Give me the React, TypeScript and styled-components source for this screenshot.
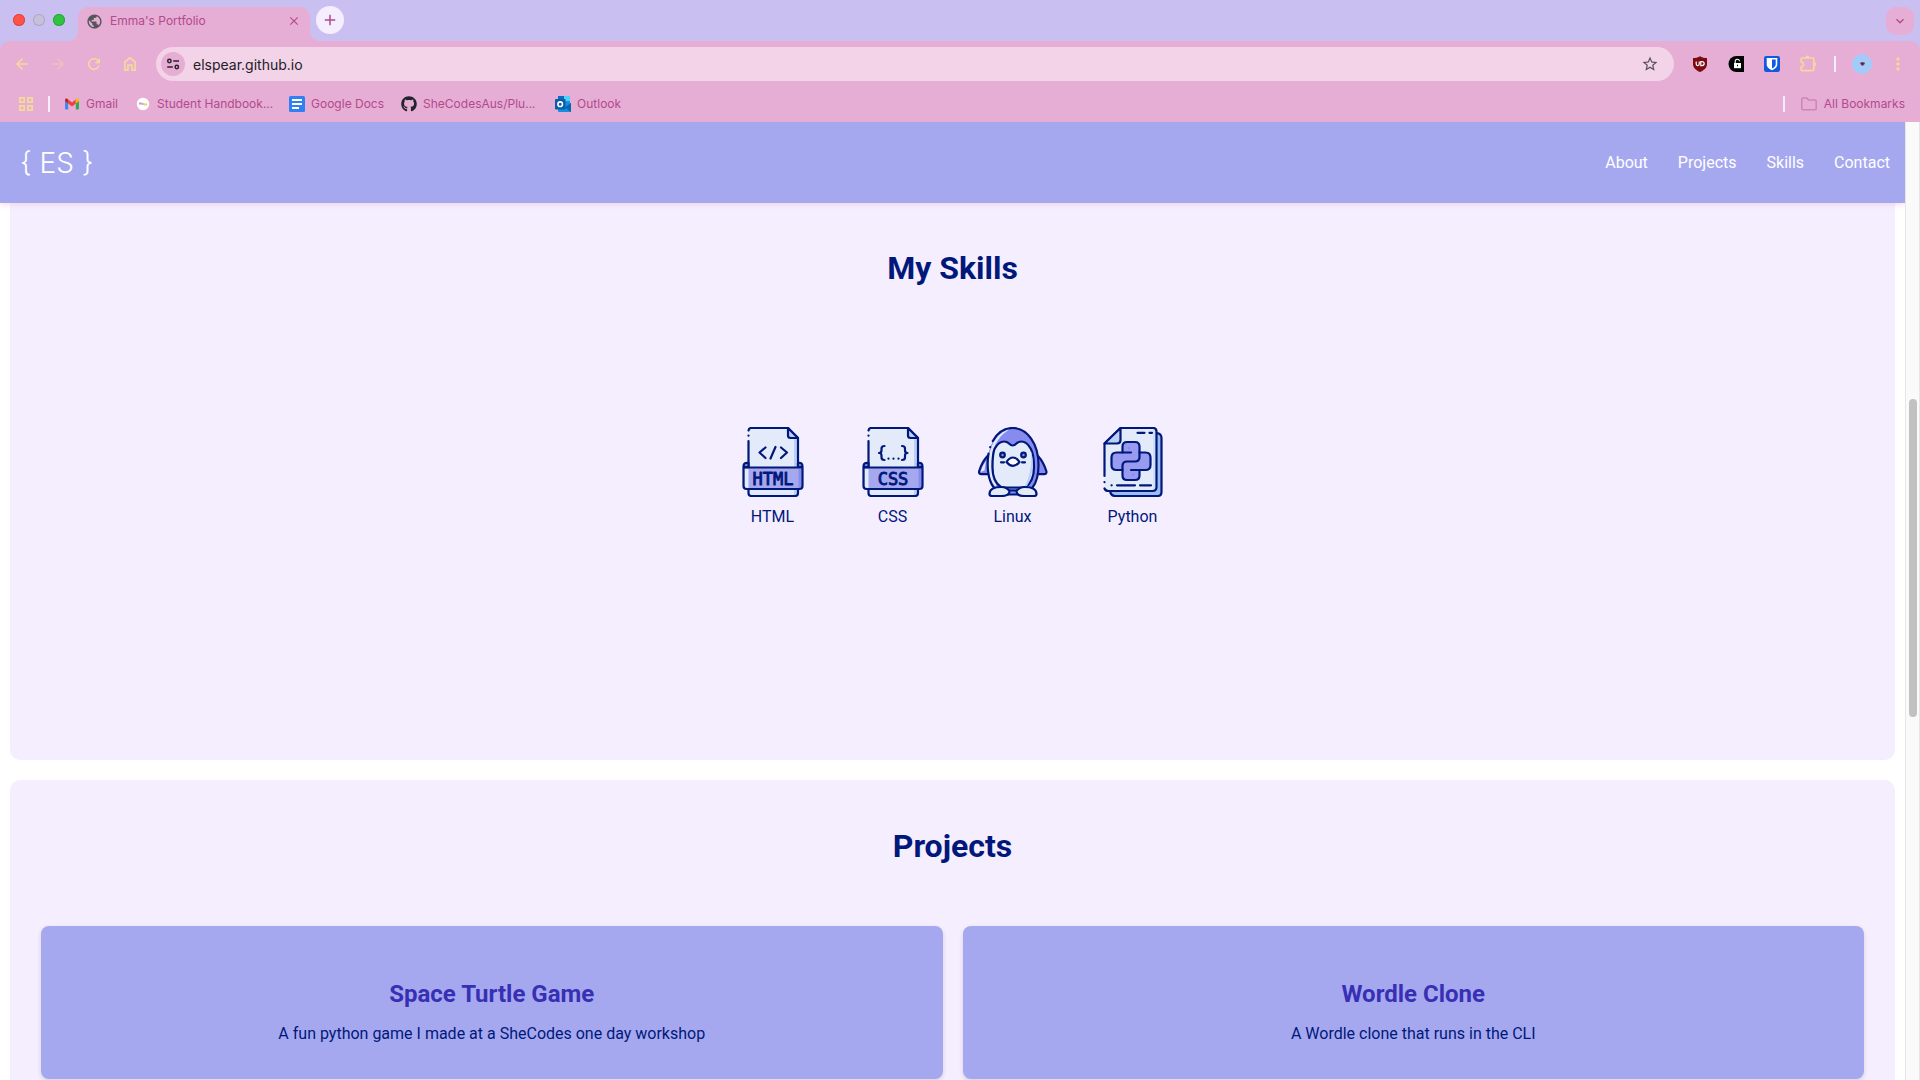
import React from "react";
import styled, { createGlobalStyle, css } from "styled-components";
import { FaGithub } from "react-icons/fa";
import {
  MdAdd,
  MdArrowBack,
  MdArrowForward,
  MdClose,
  MdExpandMore,
  MdMoreVert,
  MdPublic,
  MdRefresh,
  MdStarBorder,
} from "react-icons/md";

const color = {
  strip: "#c9bff0",
  pink: "#e6add5",
  field: "#f3d3e8",
  plum: "#b34a8c",
  butter: "#f5d99b",
  white: "#f5eeff",
  lavender: "#a6a8ef",
  navy: "#00187a",
  indigo: "#3730b4",
  paper: "#e3ebfb",
  shade: "#bcd0f7",
  violet: "#888bee",
};

const GlobalStyle = createGlobalStyle`
  *, *::before, *::after { box-sizing: border-box; }
  body { margin: 0; background: #fff; }
  button { border: 0; padding: 0; background: none; font: inherit; color: inherit; cursor: pointer; }
  a { color: inherit; text-decoration: none; }
  h2, h3, p, ul { margin: 0; padding: 0; }
  svg { display: block; flex: none; }
`;

/* ---------- Browser window ---------- */

const Window = styled.div`
  display: flex;
  flex-direction: column;
  height: 100vh;
  overflow: hidden;
`;

const Chrome = styled.header`
  flex: none;
  background: ${color.strip};
  color: ${color.plum};
  font-family: Inter, "Liberation Sans", sans-serif;
  font-size: 12px;
  line-height: 16px;
`;

const TabStrip = styled.div`
  display: flex;
  align-items: flex-start;
  height: 41px;
  padding: 0 6px 0 13px;
`;

const Lights = styled.div`
  display: flex;
  gap: 8px;
  padding-top: 14px;
  margin-right: 13px;
`;

const Light = styled.button<{ $fill: string; $edge: string }>`
  width: 12px;
  height: 12px;
  border-radius: 50%;
  background: ${(p) => p.$fill};
  box-shadow: inset 0 0 0 1px ${(p) => p.$edge};
`;

const flare = css`
  content: "";
  position: absolute;
  bottom: 0;
  width: 10px;
  height: 10px;
`;

const Tab = styled.div`
  position: relative;
  display: flex;
  align-items: center;
  gap: 7px;
  width: 232px;
  height: 34px;
  margin-top: 7px;
  padding: 0 9px 6px 8px;
  border-radius: 10px 10px 0 0;
  background: ${color.pink};

  &::before {
    ${flare}
    left: -10px;
    background: radial-gradient(circle at 0 0, transparent 10px, ${color.pink} 10px);
  }
  &::after {
    ${flare}
    right: -10px;
    background: radial-gradient(circle at 100% 0, transparent 10px, ${color.pink} 10px);
  }
`;

const TabTitle = styled.span`
  flex: 1;
  white-space: nowrap;
`;

const NewTab = styled.button`
  display: grid;
  place-items: center;
  width: 28px;
  height: 28px;
  margin: 6px auto 0 6px;
  border-radius: 50%;
  background: ${color.white};
`;

const TabSearch = styled.button`
  display: grid;
  place-items: center;
  width: 28px;
  height: 28px;
  margin-top: 7px;
  border-radius: 10px;
  background: ${color.pink};
`;

const Bars = styled.div`
  border-radius: 10px 10px 0 0;
  background: ${color.pink};
`;

const Toolbar = styled.div`
  display: flex;
  align-items: center;
  padding: 6px 4px;
`;

const ToolButton = styled.button<{ $dim?: boolean }>`
  display: grid;
  place-items: center;
  width: 36px;
  height: 34px;
  color: ${color.butter};
  opacity: ${(p) => (p.$dim ? 0.5 : 1)};
`;

const Omnibox = styled.form`
  display: flex;
  flex: 1;
  align-items: center;
  gap: 8px;
  height: 34px;
  margin: 0 8px;
  padding: 0 15px 0 5px;
  border-radius: 17px;
  background: ${color.field};
`;

const SiteInfo = styled.button`
  display: grid;
  place-items: center;
  width: 24px;
  height: 24px;
  border-radius: 50%;
  background: ${color.pink};
`;

const Address = styled.input`
  flex: 1;
  min-width: 0;
  padding: 0;
  border: 0;
  outline: 0;
  background: none;
  color: #222127;
  font-family: inherit;
  font-size: 14px;
`;

const Separator = styled.span`
  width: 2px;
  height: 16px;
  margin: 0 8px;
  background: ${color.white};
`;

const Bookmarks = styled.nav`
  display: flex;
  align-items: center;
  height: 35px;
  padding: 0 15px 2px 18px;
`;

const BookmarkList = styled.div`
  display: flex;
  flex: 1;
  gap: 17px;
  margin-left: 6px;
`;

const Bookmark = styled.a`
  display: flex;
  align-items: center;
  gap: 6px;
  white-space: nowrap;
`;

const BookmarkLabel = styled.span<{ $clipped?: boolean }>`
  ${(p) => p.$clipped && "width: 115px;"}
`;

const AllBookmarks = styled.button`
  display: flex;
  align-items: center;
  gap: 7px;
  margin-left: 8px;
`;

const AppsButton = styled.button`
  margin-right: 6px;
`;

/* ---------- Portfolio page ---------- */

const Viewport = styled.div`
  display: flex;
  flex: 1;
  min-height: 0;
`;

const Page = styled.div`
  display: flex;
  flex: 1;
  flex-direction: column;
  min-width: 0;
  overflow: hidden;
  background: #fff;
  color: ${color.navy};
  font-family: Roboto, "Liberation Sans", sans-serif;
  font-size: 16px;
  line-height: 20px;
`;

const NavBar = styled.header`
  position: relative;
  z-index: 1;
  display: flex;
  flex: none;
  align-items: center;
  justify-content: space-between;
  height: 81px;
  padding: 0 15px 0 20px;
  background: ${color.lavender};
  color: #fff;
  box-shadow: 0 2px 5px rgba(230, 173, 213, 0.35);
`;

const Logo = styled.a`
  font-family: Inter, "Open Sans", sans-serif;
  font-size: 28px;
  font-weight: 300;
  line-height: 40px;
`;

const NavLinks = styled.nav`
  display: flex;
  gap: 30px;
`;

const Main = styled.main`
  display: flex;
  flex: 1;
  flex-direction: column;
  gap: 20px;
  min-height: 0;
  padding: 0 10px;
  overflow: hidden;
`;

const Section = styled.section<{ $continued?: boolean }>`
  flex: none;
  padding: ${(p) => (p.$continued ? "45px 31px" : "46px 31px")};
  border-radius: ${(p) => (p.$continued ? "0 0 10px 10px" : "10px")};
  background: ${color.white};
  text-align: center;
`;

const Heading = styled.h2`
  font-size: 32px;
  font-weight: 700;
  line-height: 40px;
`;

const Skills = styled.ul`
  display: flex;
  justify-content: center;
  padding: 139px 0 188px;
  list-style: none;
`;

const Skill = styled.li`
  display: flex;
  flex-direction: column;
  align-items: center;
  gap: 10px;
  width: 120px;
`;

const Cards = styled.div`
  display: grid;
  grid-template-columns: 1fr 1fr;
  gap: 20px;
  padding-top: 60px;
`;

const Card = styled.article`
  display: flex;
  flex-direction: column;
  gap: 16px;
  padding: 54px 20px 35px;
  border-radius: 8px;
  background: ${color.lavender};
  box-shadow: 0 2px 5px rgba(0, 0, 0, 0.12);
`;

const CardTitle = styled.h3`
  color: ${color.indigo};
  font-size: 24px;
  font-weight: 700;
  line-height: 28px;
`;

const ScrollTrack = styled.div`
  flex: none;
  width: 15px;
  padding: 277px 2px 0 3px;
  border: solid #e6e6e6;
  border-width: 0 1px;
  background: #fafafa;
`;

const ScrollThumb = styled.div`
  width: 8px;
  height: 318px;
  border-radius: 4px;
  background: #c1c1c1;
`;

/* ---------- Toolbar and bookmark icons ---------- */

const HomeIcon = () => (
  <svg width="14" height="16" viewBox="0 0 14 16" fill="none" stroke="currentColor" strokeWidth="1.7">
    <path d="M1.9 14.1V6L7 1.9 12.1 6v8.1H9V9.2H5v4.9z" />
  </svg>
);

const PuzzleIcon = () => (
  <svg width="18" height="18" viewBox="0 0 18 18">
    <path
      d="M3 3h11q.8 0 .8.800v11q0 .8-.8.800H3q-.8 0-.8-.8v-3q2.400-.5 2.400-2.500T2.200 6.800v-3Q2.200 3 3 3z"
      fill="none"
      stroke="currentColor"
      strokeWidth="1.700"
    />
    <path d="M6.500 2.500a2 2 0 0 1 4 0zM15.300 7.300a2 2 0 0 1 0 4z" fill="currentColor" />
  </svg>
);

const TuneIcon = () => (
  <svg width="14" height="12" viewBox="0 0 14 12" fill="none" stroke="#28232a" strokeWidth="1.5">
    <circle cx="3.400" cy="3" r="1.700" />
    <path d="M7.200 3h5.800M1.200 9h5.600" />
    <circle cx="10.800" cy="9" r="1.700" />
  </svg>
);

const ShieldIcon = () => (
  <svg width="16" height="16" viewBox="0 0 16 16">
    <path d="M8 .2C10 1.500 12.300 2 15 2v6c0 4-3.400 6.500-7 8-3.600-1.500-7-4-7-8V2C3.700 2 6 1.500 8 .2z" fill="#7d0a10" />
    <path d="M4.200 5.500v2.600c0 2 3 2 3 0V5.500M8.800 5.600v4h1.100c3 0 3-4 0-4z" fill="none" stroke="#fff" strokeWidth="1.200" />
  </svg>
);

const LockIcon = () => (
  <svg width="16" height="16" viewBox="0 0 16 16">
    <path d="M16 0v16H8.500A8 8 0 0 1 8.500 0z" fill="#000" />
    <path d="M6 7h7v5.200H6z" fill="#fff" />
    <path d="M7.200 7V5.600a2.200 2.200 0 0 1 4.400-.4" fill="none" stroke="#fff" strokeWidth="1.100" />
    <path d="M9 8.700h1v1.600H9z" fill="#000" />
  </svg>
);

const VaultIcon = () => (
  <svg width="16" height="16" viewBox="0 0 16 16">
    <rect width="16" height="16" rx="2.200" fill="#0f5bdc" />
    <path d="M2.700 2h10.600v6.200c0 3-2.600 4.800-5.300 6-2.700-1.200-5.300-3-5.300-6z" fill="#fff" />
    <path d="M8 3.600h3.700v4.700c0 1.900-1.700 3.200-3.700 4.200z" fill="#0f5bdc" />
  </svg>
);

const AvatarIcon = () => (
  <svg width="20" height="20" viewBox="0 0 20 20">
    <circle cx="10" cy="10" r="10" fill="#a2cbfa" />
    <path d="M8.300 8.500h4.400v1.600l-2.200 1.900-2.200-1.900z" fill="#7c2a3d" />
    <path d="M9.500 8.500h2v1.300h-2z" fill="#35303e" />
  </svg>
);

const AppsIcon = () => (
  <svg width="16" height="16" viewBox="0 0 16 16" fill="none" stroke={color.butter} strokeWidth="1.800">
    <path d="M1.900 1.900h4.200v4.200H1.900zM9.900 1.900h4.200v4.200H9.900zM1.900 9.900h4.200v4.200H1.900zM9.900 9.900h4.200v4.200H9.900z" />
  </svg>
);

const GmailIcon = () => (
  <svg width="16" height="16" viewBox="0 0 16 16">
    <path d="M1 4.500l3.200 2.400v6.600H2a1 1 0 0 1-1-1z" fill="#4285f4" />
    <path d="M15 4.500l-3.200 2.400v6.600H14a1 1 0 0 0 1-1z" fill="#34a853" />
    <path d="M4.200 3.600L8 6.500l3.800-2.900v3.900L8 10.400 4.200 7.500z" fill="#ea4335" />
    <path d="M1 4.100c0-1.500 1.500-1.900 2.500-1.100l.7.600v3.900L1 5.100z" fill="#c5221f" />
    <path d="M15 4.100c0-1.500-1.500-1.900-2.500-1.100l-.7.600v3.900L15 5.100z" fill="#fbbc04" />
  </svg>
);

const HandbookIcon = () => (
  <svg width="16" height="16" viewBox="0 0 16 16">
    <circle cx="8" cy="8" r="6.200" fill="#fff" />
    <path d="M4 7.500h3.500" stroke="#b6a0d8" strokeWidth="2" />
    <path d="M6.500 8h3" stroke="#e9b79e" strokeWidth="2" />
    <path d="M9 8.500h3.300" stroke="#f3cf72" strokeWidth="2" />
  </svg>
);

const DocsIcon = () => (
  <svg width="16" height="16" viewBox="0 0 16 16">
    <rect width="16" height="16" rx="1.500" fill="#3180f3" />
    <path d="M3 4h10M3 8h10M3 12h7" stroke="#fff" strokeWidth="1.900" />
  </svg>
);

const OutlookIcon = () => (
  <svg width="16" height="16" viewBox="0 0 16 16">
    <path d="M3 0h12v9H3z" fill="#1a8fe0" />
    <path d="M9 0h6v5H9z" fill="#50d0fa" />
    <path d="M3 0h6v4H3z" fill="#0f6cbd" />
    <path d="M3 8l13-1v9H4a1 1 0 0 1-1-1z" fill="#1490df" />
    <path d="M16 7v9l-6-4.500z" fill="#0a63ad" />
    <rect y="3" width="10.500" height="10.500" rx="1" fill="#0a5cad" />
    <circle cx="5.200" cy="8.200" r="2.300" fill="none" stroke="#fff" strokeWidth="1.600" />
  </svg>
);

const FolderIcon = () => (
  <svg width="16" height="14" viewBox="0 0 16 14" fill="none" stroke="#d283b5" strokeWidth="1.500">
    <path d="M.8 2.200c0-.8.400-1.200 1.200-1.200h3.800l1.700 2H14c.8 0 1.200.4 1.200 1.200v7.400c0 .8-.4 1.200-1.200 1.200H2c-.8 0-1.200-.4-1.200-1.200z" />
  </svg>
);

/* ---------- Skill illustrations ---------- */

const Art = ({ children }: { children: React.ReactNode }) => (
  <svg
    width="70"
    height="70"
    viewBox="0 0 70 70"
    fill="none"
    stroke={color.navy}
    strokeWidth="2.200"
    strokeLinecap="round"
    strokeLinejoin="round"
    aria-hidden="true"
  >
    {children}
  </svg>
);

/** A dog-eared sheet wrapped by a band that carries the language name. */
const SheetIcon = ({ label, children }: { label: string; children: React.ReactNode }) => (
  <Art>
    <path d="M10.500 3Q10.500 1 13 1h37l10 10v55q0 3-3 3H13q-2.500 0-2.500-3z" fill={color.paper} stroke="none" />
    <path d="M56 11h4v55q0 3-3 3h-4q3 0 3-3z" fill={color.shade} stroke="none" />
    <path d="M10.500 14v26M10.500 8.500v.2M10.500 3.500Q11 1 13 1h37l10 10v29" />
    <path d="M50 1v7.500q0 2.500 2.500 2.500H60z" fill={color.shade} />
    <path d="M10.500 62v4q0 3 3 3H57q3 0 3-3v-4" />
    <path d="M10.500 40.500v-4.500q-5-1-5 3.500zM60 40.500v-4.500q4.500-1 4.500 3.500z" fill={color.violet} />
    <path d="M5.500 40.500h59V59q0 3-3 3h-53q-3 0-3-3z" fill={color.lavender} stroke="none" />
    <path d="M6.500 42h4v19h-1.500q-2.500 0-2.500-3z" fill={color.paper} stroke="none" />
    <path d="M60.500 42h3v16q0 3-3 3z" fill={color.violet} stroke="none" />
    <path d="M5.500 40.500h59V59q0 3-3 3h-53q-3 0-3-3z" />
    {children}
    <text
      x="35"
      y="57.500"
      textAnchor="middle"
      fontFamily="DejaVu Sans Mono, monospace"
      fontSize="17"
      fill={color.navy}
      strokeWidth="0.900"
    >
      {label}
    </text>
  </Art>
);

const HtmlIcon = () => (
  <SheetIcon label="HTML">
    <path d="M27.500 20.500l-6 5 6 5.500M37.500 20l-5 11.500M43 20.500l6 5-6 5.500" />
  </SheetIcon>
);

const CssIcon = () => (
  <SheetIcon label="CSS">
    <path d="M26.500 19q-3 0-3 2.500v2q0 2.500-2.500 2.500 2.500 0 2.500 2.500v2q0 2.500 3 2.500M44 19q3 0 3 2.500v2q0 2.500 2.500 2.500-2.500 0-2.500 2.500v2q0 2.500-3 2.500M30.500 31.500v.2M35.500 31.500v.2M40.500 31.500v.2" />
  </SheetIcon>
);

const LinuxIcon = () => (
  <Art>
    <path d="M9.500 29Q4 35 1.200 44q-.8 3 2.300 3.200h6M60 29q5.500 6 8.300 15 .8 3-2.300 3.200h-6" fill={color.violet} />
    <path d="M8 34q-4 5-5.500 11l4-1.500z" fill={color.paper} stroke="none" />
    <path d="M34.700 1C20 1 9.500 17 9.500 38c0 12 4 22 9 26h32.400c5-4 9-14 9-26C59.900 17 49.500 1 34.700 1z" fill={color.violet} stroke="none" />
    <path d="M32 2C21 5 12.500 15 10.500 32c-1 12 1.500 22 7 28l1-2c-5-6-6-16-4.500-28C15.500 17 22 8 32 2z" fill={color.paper} stroke="none" />
    <path d="M14.800 14C19.500 5.500 26.500 1 34.700 1 49.500 1 60.500 17 60.500 38c0 10-2.500 18-6 22.500M12.200 20v.2M10.500 26.500C8.500 39 10 53 15.500 60" />
    <path d="M16.500 22q4-7.500 9.500-7.500 3 0 5 2 3.700 4 7.400 0 2-2 5-2 5.500 0 9.500 7.500C55.500 27 56 34 56 40c0 10-3.500 17-9 20.500H23.500C18 57 14.500 50 14.500 40c0-6 0-13 2-18z" fill={color.paper} />
    <path d="M53 24c3 9 2 26-4 35l-3 1c6-9 8-23 7-36z" fill={color.shade} stroke="none" />
    <circle cx="24.500" cy="28" r="2.300" fill={color.violet} />
    <circle cx="45.500" cy="28" r="2.300" fill={color.violet} />
    <path d="M23 35.300h3M44 35.300h3" />
    <path d="M28.500 35q3-4.500 6.500-4.500t6.500 4.500q-3 3.800-6.500 3.800T28.500 35z" fill="#fff" />
    <path d="M30 63.500h10v4H30z" fill={color.violet} />
    <path d="M11.500 67q0-7 12-7 5 0 8 4 0 5-8 5h-9q-3 0-3-2zM58.500 67q0-7-12-7-5 0-8 4 0 5 8 5h9q3 0 3-2z" fill={color.paper} />
  </Art>
);

const PythonIcon = () => (
  <Art>
    <path d="M58.500 6q5 .5 5 5v54q0 4-4 4H17q-4 0-5-5z" fill="#9dbcf2" />
    <path d="M22.500 1H55q3.500 0 3.500 3.500V60q0 4-4 4h-44q-4 0-4-4V16.500z" fill={color.paper} stroke="none" />
    <path d="M55 1q3.500 0 3.500 3.500V60q0 4-4 4H51q4 0 4-4V1z" fill="#cfdefa" stroke="none" />
    <path d="M6.500 49V16.500L22.500 1H55q3.500 0 3.500 3.500V60q0 4-4 4h-44q-3 0-4-2.500M6.500 55v.2" />
    <path d="M22.500 1v12q0 3.500-3.500 3.500H6.500z" fill={color.shade} />
    <path d="M39.500 5.800h7M51.500 5.800h2.500M13.500 58.300h.2M19 58.300h18M42 58.300h11" />
    <path
      d="M24.500 25.500v-6q0-4.500 4.500-4.500h8q4.500 0 4.500 4.500v6H47.500q5 0 5 5v7.500q0 5-5 5h-6v5.500q0 4.500-4.500 4.500h-8q-4.500 0-4.500-4.500V43h-6q-5 0-5-5v-7.500q0-5 5-5z"
      fill="#989bef"
    />
    <path d="M24.500 25.500h8.500M41.500 25.500V30q0 4.500-4.500 4.500h-8q-4.500 0-4.500 4.500v4M33 43h8.500" />
    <path d="M31 21v.2M35 47.500v.2" stroke={color.violet} />
  </Art>
);

/* ---------- Content ---------- */

const bookmarks = [
  { label: "Gmail", icon: <GmailIcon /> },
  { label: "Student Handbook...", icon: <HandbookIcon />, clipped: true },
  { label: "Google Docs", icon: <DocsIcon /> },
  { label: "SheCodesAus/Plu...", icon: <FaGithub size={16} color="#22232b" />, clipped: true },
  { label: "Outlook", icon: <OutlookIcon /> },
];

const extensions = [
  { name: "Ad blocker", icon: <ShieldIcon /> },
  { name: "Unlocker", icon: <LockIcon /> },
  { name: "Password vault", icon: <VaultIcon /> },
  { name: "Extensions", icon: <PuzzleIcon /> },
];

const skills = [
  { name: "HTML", icon: <HtmlIcon /> },
  { name: "CSS", icon: <CssIcon /> },
  { name: "Linux", icon: <LinuxIcon /> },
  { name: "Python", icon: <PythonIcon /> },
];

const projects = [
  { title: "Space Turtle Game", text: "A fun python game I made at a SheCodes one day workshop" },
  { title: "Wordle Clone", text: "A Wordle clone that runs in the CLI" },
];

export default function App() {
  return (
    <Window>
      <GlobalStyle />
      <Chrome>
        <TabStrip>
          <Lights>
            <Light aria-label="Close window" $fill="#ff5249" $edge="#e0443e" />
            <Light aria-label="Minimise window" $fill="#c6c1da" $edge="#aca5c4" />
            <Light aria-label="Zoom window" $fill="#32c146" $edge="#27a838" />
          </Lights>
          <Tab>
            <MdPublic size={17} color="#54565c" />
            <TabTitle>Emma's Portfolio</TabTitle>
            <button aria-label="Close tab">
              <MdClose size={14} />
            </button>
          </Tab>
          <NewTab aria-label="New tab">
            <MdAdd size={18} />
          </NewTab>
          <TabSearch aria-label="Search tabs">
            <MdExpandMore size={16} />
          </TabSearch>
        </TabStrip>
        <Bars>
          <Toolbar>
            <ToolButton aria-label="Back"><MdArrowBack size={18} /></ToolButton>
            <ToolButton aria-label="Forward" $dim><MdArrowForward size={18} /></ToolButton>
            <ToolButton aria-label="Reload"><MdRefresh size={18} /></ToolButton>
            <ToolButton aria-label="Home"><HomeIcon /></ToolButton>
            <Omnibox onSubmit={(e) => e.preventDefault()}>
              <SiteInfo type="button" aria-label="Site information"><TuneIcon /></SiteInfo>
              <Address aria-label="Address" defaultValue="elspear.github.io" />
              <button type="button" aria-label="Bookmark this tab">
                <MdStarBorder size={18} color="#5a4f5a" />
              </button>
            </Omnibox>
            {extensions.map((ext) => (
              <ToolButton key={ext.name} aria-label={ext.name}>{ext.icon}</ToolButton>
            ))}
            <Separator />
            <ToolButton aria-label="Profile"><AvatarIcon /></ToolButton>
            <ToolButton aria-label="Menu"><MdMoreVert size={20} /></ToolButton>
          </Toolbar>
          <Bookmarks aria-label="Bookmarks">
            <AppsButton aria-label="Apps"><AppsIcon /></AppsButton>
            <Separator />
            <BookmarkList>
              {bookmarks.map((b) => (
                <Bookmark key={b.label} href="#">
                  {b.icon}
                  <BookmarkLabel $clipped={b.clipped}>{b.label}</BookmarkLabel>
                </Bookmark>
              ))}
            </BookmarkList>
            <Separator />
            <AllBookmarks>
              <FolderIcon />
              All Bookmarks
            </AllBookmarks>
          </Bookmarks>
        </Bars>
      </Chrome>

      <Viewport>
        <Page>
          <NavBar>
            <Logo href="#">{"{ ES }"}</Logo>
            <NavLinks>
              <a href="#about">About</a>
              <a href="#projects">Projects</a>
              <a href="#skills">Skills</a>
              <a href="#contact">Contact</a>
            </NavLinks>
          </NavBar>
          <Main>
            <Section id="skills" $continued>
              <Heading>My Skills</Heading>
              <Skills>
                {skills.map((s) => (
                  <Skill key={s.name}>
                    {s.icon}
                    {s.name}
                  </Skill>
                ))}
              </Skills>
            </Section>
            <Section id="projects">
              <Heading>Projects</Heading>
              <Cards>
                {projects.map((p) => (
                  <Card key={p.title}>
                    <CardTitle>{p.title}</CardTitle>
                    <p>{p.text}</p>
                  </Card>
                ))}
              </Cards>
            </Section>
          </Main>
        </Page>
        <ScrollTrack aria-hidden="true">
          <ScrollThumb />
        </ScrollTrack>
      </Viewport>
    </Window>
  );
}
